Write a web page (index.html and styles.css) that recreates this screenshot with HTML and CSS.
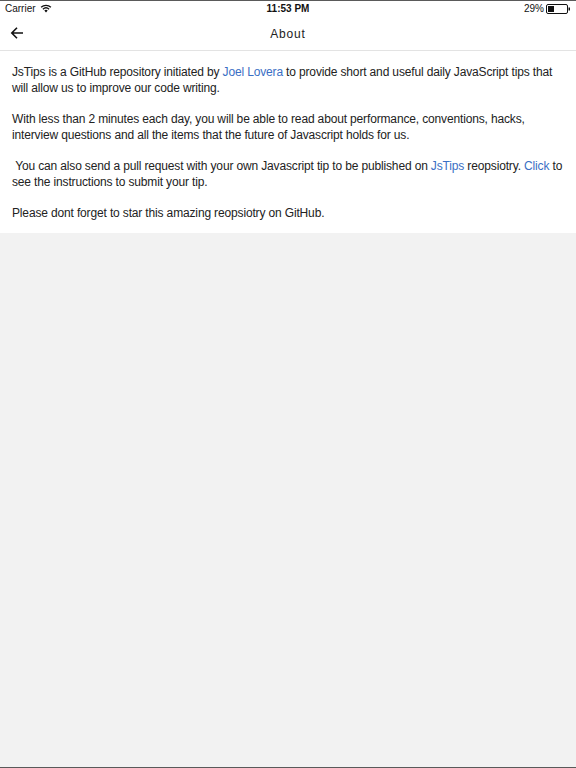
FILE: index.html
```html
<!DOCTYPE html>
<html>
<head>
<meta charset="utf-8">
<link rel="stylesheet" href="styles.css">
</head>
<body>
<div class="screen">
  <div class="statusbar">
    <div class="sb-left">Carrier
      <svg class="wifi" width="12" height="9" viewBox="0 0 12 9"><path d="M6 8.6 L4.3 6.6 A2.6 2.6 0 0 1 7.7 6.6 Z" fill="#111"/><path d="M2.9 5.2 A4.6 4.6 0 0 1 9.1 5.2" stroke="#111" stroke-width="1.3" fill="none"/><path d="M1.1 3.2 A7.2 7.2 0 0 1 10.9 3.2" stroke="#111" stroke-width="1.3" fill="none"/></svg>
    </div>
    <div class="sb-center">11:53 PM</div>
    <div class="sb-right">29%
      <svg class="battery" width="25" height="10" viewBox="0 0 25 10"><rect x="0.5" y="0.5" width="21" height="9" rx="1.5" fill="none" stroke="#111" stroke-width="1"/><rect x="2" y="2" width="6" height="6" fill="#111"/><rect x="22.5" y="3.5" width="1.5" height="3" fill="#111"/></svg>
    </div>
  </div>
  <div class="header">
    <svg class="back" width="14" height="14" viewBox="0 0 14 14"><path d="M13 7 H1.8 M7 1.8 L1.8 7 L7 12.2" stroke="#111" stroke-width="1.6" fill="none"/></svg>
    <div class="title">About</div>
  </div>
  <div class="content">
    <p>JsTips is a GitHub repository initiated by <a>Joel Lovera</a> to provide short and useful daily JavaScript tips that will allow us to improve our code writing.</p>
    <p>With less than 2 minutes each day, you will be able to read about performance, conventions, hacks, interview questions and all the items that the future of Javascript holds for us.</p>
    <p>&nbsp;You can also send a pull request with your own Javascript tip to be published on <a>JsTips</a> reopsiotry. <a>Click</a> to see the instructions to submit your tip.</p>
    <p>Please dont forget to star this amazing reopsiotry on GitHub.</p>
  </div>
  <div class="rest"></div>
</div>
</body>
</html>
```
FILE: styles.css
```css
html, body {
  margin: 0;
  padding: 0;
}
body {
  width: 576px;
  height: 768px;
  overflow: hidden;
  font-family: "Liberation Sans", Arial, sans-serif;
  background: #f2f2f2;
}
.screen {
  display: flex;
  flex-direction: column;
  height: 768px;
  box-sizing: border-box;
  border-top: 1px solid #5a5a5a;
  border-bottom: 1px solid #5a5a5a;
}
.statusbar {
  height: 15px;
  background: #fff;
  display: flex;
  align-items: center;
  justify-content: space-between;
  padding: 0 5px;
  font-size: 10px;
  color: #111;
  position: relative;
}
.sb-left, .sb-right {
  display: flex;
  align-items: center;
  gap: 4px;
}
.sb-right { gap: 2px; }
.sb-center {
  position: absolute;
  left: 0;
  right: 0;
  text-align: center;
  font-weight: 700;
}
.header {
  height: 35px;
  padding-top: 2px;
  box-sizing: border-box;
  background: #fff;
  border-bottom: 1px solid #e3e3e3;
  display: flex;
  align-items: center;
  position: relative;
}
.back {
  margin-left: 10px;
  margin-top: -2px;
}
.title {
  position: absolute;
  left: 0;
  right: 0;
  text-align: center;
  font-size: 12px;
  letter-spacing: 0.8px;
  color: #222;
}
.content {
  background: #fff;
  padding: 14px 12px 11px;
  font-size: 12px;
  line-height: 15.7px;
  letter-spacing: -0.15px;
  color: #222;
}
.content p {
  margin: 0 0 15.7px;
}
.content p:last-child {
  margin-bottom: 0;
}
.content a {
  color: #3a6fc4;
}
.rest {
  flex: 1;
}
```
